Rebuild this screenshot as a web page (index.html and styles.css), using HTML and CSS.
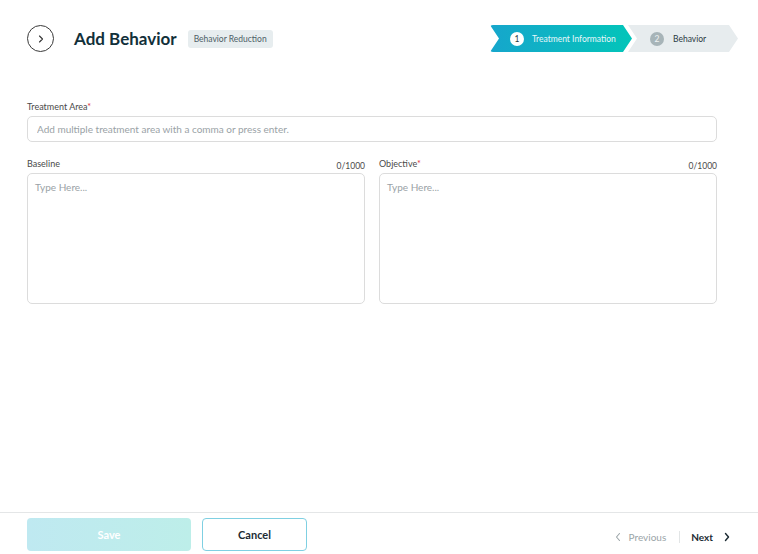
FILE: index.html
```html
<!DOCTYPE html>
<html>
<head>
  <meta charset="UTF-8" />
  <meta name="viewport" content="width=device-width, initial-scale=1.0" />
  <title>Add Behavior</title>
  <link rel="stylesheet" href="styles.css">
</head>
<body>
  <div class="page">
    <div class="header">
      <div class="header-left">
        <button class="back-button">
          <svg width="10" height="10" viewBox="0 0 10 10"><path d="M3.5 2 L6.5 5 L3.5 8" fill="none" stroke="#333" stroke-width="1.1" stroke-linecap="round" stroke-linejoin="round"/></svg>
        </button>
        <h1>Add Behavior</h1>
        <span class="badge">Behavior Reduction</span>
      </div>
      <div class="stepper">
        <div class="step active">
          <span class="step-num">1</span>
          <span class="step-label">Treatment Information</span>
        </div>
        <div class="step">
          <span class="step-num">2</span>
          <span class="step-label">Behavior</span>
        </div>
      </div>
    </div>

    <div class="form">
      <div class="field">
        <label class="label">Treatment Area<span class="req">*</span></label>
        <input class="input" type="text" placeholder="Add multiple treatment area with a comma or press enter.">
      </div>
      <div class="row">
        <div class="field">
          <div class="label-row">
            <label class="label">Baseline</label>
            <span class="counter">0/1000</span>
          </div>
          <textarea class="textarea" placeholder="Type Here..."></textarea>
        </div>
        <div class="field">
          <div class="label-row">
            <label class="label">Objective<span class="req">*</span></label>
            <span class="counter">0/1000</span>
          </div>
          <textarea class="textarea" placeholder="Type Here..."></textarea>
        </div>
      </div>
    </div>

    <div class="footer">
      <div class="actions">
        <button class="btn-save">Save</button>
        <button class="btn-cancel">Cancel</button>
      </div>
      <div class="pager">
        <span class="prev">
          <svg width="8" height="10" viewBox="0 0 8 10"><path d="M5.5 1.5 L2.5 5 L5.5 8.5" fill="none" stroke="#9aa4a8" stroke-width="1.1" stroke-linecap="round" stroke-linejoin="round"/></svg>
          Previous
        </span>
        <span class="divider"></span>
        <span class="next">
          Next
          <svg width="8" height="10" viewBox="0 0 8 10"><path d="M2.5 1.5 L5.5 5 L2.5 8.5" fill="none" stroke="#1c2b33" stroke-width="1.4" stroke-linecap="round" stroke-linejoin="round"/></svg>
        </span>
      </div>
    </div>
  </div>
</body>
</html>
```

FILE: styles.css
```css
* {
  box-sizing: border-box;
}
body {
  font-family: Lato, "Noto Sans", sans-serif;
  margin: 0;
  background: #fff;
  color: #1c2b33;
}
.page {
  width: 758px;
  height: 554px;
  display: flex;
  flex-direction: column;
}
.header {
  display: flex;
  justify-content: space-between;
  align-items: center;
  padding: 25px 20px 0 27px;
  height: 52px;
}
.header-left {
  display: flex;
  align-items: center;
}
.back-button {
  width: 27px;
  height: 27px;
  border-radius: 50%;
  border: 1px solid #3a3a3a;
  background: #fff;
  padding: 0;
  display: flex;
  align-items: center;
  justify-content: center;
}
h1 {
  margin: 0 0 0 20px;
  font-size: 17px;
  font-weight: 700;
  color: #12303a;
}
.badge {
  margin-left: 11px;
  background: #e7edef;
  color: #4d5e66;
  font-size: 8.5px;
  padding: 4px 6px;
  border-radius: 3px;
}
.stepper {
  display: flex;
}
.step {
  height: 27px;
  display: flex;
  align-items: center;
  clip-path: polygon(0 0, calc(100% - 9px) 0, 100% 50%, calc(100% - 9px) 100%, 0 100%, 9px 50%);
  background: #e7ecee;
  font-size: 8.5px;
  color: #2a3a42;
}
.step.active {
  width: 142px;
  padding-left: 20px;
  background: linear-gradient(90deg, #16a6cc, #03c5b9);
  color: #e6f7fa;
  border-radius: 3px;
}
.step + .step {
  width: 110px;
  margin-left: -4px;
  padding-left: 22px;
}
.step-num {
  width: 14px;
  height: 14px;
  border-radius: 50%;
  background: #a7b4b8;
  color: #eef2f3;
  font-size: 8.5px;
  display: flex;
  align-items: center;
  justify-content: center;
  margin-right: 9px;
}
.step.active .step-num {
  background: #fff;
  color: #2a3a42;
  margin-right: 8px;
}
.form {
  padding: 49px 41px 0 27px;
  flex: 1;
}
.field {
  display: flex;
  flex-direction: column;
}
.label {
  font-size: 9px;
  color: #4a4a4a;
  margin-bottom: 4px;
}
.req {
  color: #e0303a;
}
.input {
  height: 26px;
  border: 1px solid #dcdcdc;
  border-radius: 5px;
  padding: 0 9px;
  font-family: inherit;
  font-size: 10px;
  color: #333;
}
.input::placeholder,
.textarea::placeholder {
  color: #9aa2a6;
}
.row {
  display: grid;
  grid-template-columns: 1fr 1fr;
  gap: 14px;
  margin-top: 16px;
}
.label-row {
  display: flex;
  justify-content: space-between;
  align-items: flex-end;
}
.counter {
  font-size: 8.5px;
  color: #4a4a4a;
  margin-bottom: 2px;
}
.textarea {
  height: 131px;
  border: 1px solid #dcdcdc;
  border-radius: 5px;
  padding: 7px 7px;
  font-family: inherit;
  font-size: 10px;
  resize: none;
}
.footer {
  border-top: 1px solid #e4e6e7;
  height: 42px;
  display: flex;
  justify-content: space-between;
  align-items: flex-start;
  padding: 5px 27px 0 27px;
}
.actions {
  display: flex;
  gap: 11px;
}
.btn-save {
  width: 164px;
  height: 33px;
  border: none;
  border-radius: 4px;
  background: linear-gradient(90deg, #bfe9f1, #bdeee9);
  color: #fff;
  font-family: inherit;
  font-weight: 700;
  font-size: 11px;
}
.btn-cancel {
  width: 105px;
  height: 33px;
  border: 1px solid #7fd0e2;
  border-radius: 4px;
  background: #fff;
  color: #1c2b33;
  font-family: inherit;
  font-weight: 700;
  font-size: 11px;
}
.pager {
  display: flex;
  align-items: center;
  height: 38px;
  font-size: 10px;
}
.prev {
  display: flex;
  align-items: center;
  gap: 7px;
  color: #9aa4a8;
}
.divider {
  width: 1px;
  height: 12px;
  background: #e2e5e6;
  margin: 0 11px 0 13px;
}
.next {
  display: flex;
  align-items: center;
  gap: 10px;
  font-weight: 700;
  color: #1c2b33;
}
```
